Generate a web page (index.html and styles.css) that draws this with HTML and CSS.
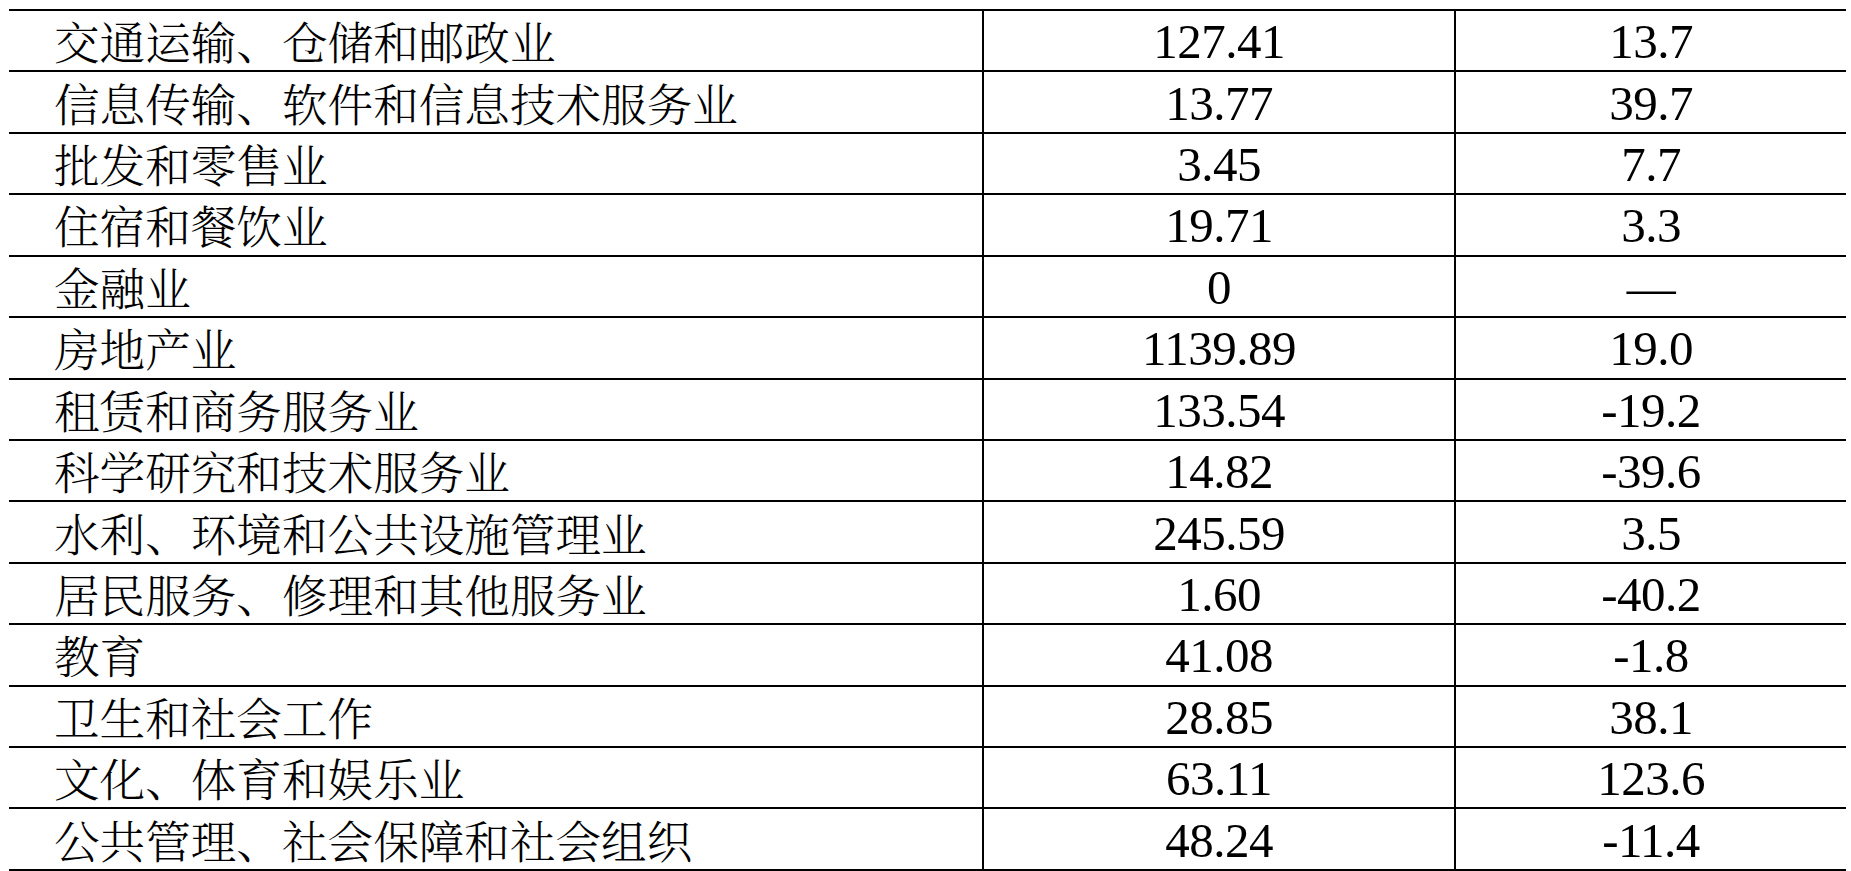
FILE: index.html
```html
<!DOCTYPE html>
<html lang="zh-CN">
<head>
<meta charset="utf-8">
<title>行业数据</title>
<link rel="stylesheet" href="styles.css">
</head>
<body>
<div class="sheet">
  <div class="cell name">交通运输、仓储和邮政业</div><div class="cell num">127.41</div><div class="cell num">13.7</div>
  <div class="cell name">信息传输、软件和信息技术服务业</div><div class="cell num">13.77</div><div class="cell num">39.7</div>
  <div class="cell name">批发和零售业</div><div class="cell num">3.45</div><div class="cell num">7.7</div>
  <div class="cell name">住宿和餐饮业</div><div class="cell num">19.71</div><div class="cell num">3.3</div>
  <div class="cell name">金融业</div><div class="cell num">0</div><div class="cell num">—</div>
  <div class="cell name">房地产业</div><div class="cell num">1139.89</div><div class="cell num">19.0</div>
  <div class="cell name">租赁和商务服务业</div><div class="cell num">133.54</div><div class="cell num">-19.2</div>
  <div class="cell name">科学研究和技术服务业</div><div class="cell num">14.82</div><div class="cell num">-39.6</div>
  <div class="cell name">水利、环境和公共设施管理业</div><div class="cell num">245.59</div><div class="cell num">3.5</div>
  <div class="cell name">居民服务、修理和其他服务业</div><div class="cell num">1.60</div><div class="cell num">-40.2</div>
  <div class="cell name">教育</div><div class="cell num">41.08</div><div class="cell num">-1.8</div>
  <div class="cell name">卫生和社会工作</div><div class="cell num">28.85</div><div class="cell num">38.1</div>
  <div class="cell name">文化、体育和娱乐业</div><div class="cell num">63.11</div><div class="cell num">123.6</div>
  <div class="cell name">公共管理、社会保障和社会组织</div><div class="cell num">48.24</div><div class="cell num">-11.4</div>
</div>
</body>
</html>
```
FILE: styles.css
```css
html, body {
  margin: 0;
  padding: 0;
  background: #ffffff;
}
body {
  padding: 9px 0 0 9px;
  overflow: hidden;
}
.sheet {
  display: grid;
  grid-template-columns: 973px 472px 392px;
  grid-auto-rows: 61.43px;
  border-top: 2px solid #000;
  width: 1837px;
  color: #000;
}
.cell {
  box-sizing: border-box;
  border-bottom: 2px solid #000;
  display: flex;
  align-items: center;
}
.name {
  padding-left: 45px;
  font-family: "Noto Serif CJK SC", "Noto Sans CJK SC", sans-serif;
  font-size: 45.6px;
  font-weight: 300;
  white-space: nowrap;
}
.num {
  justify-content: center;
  border-left: 2px solid #000;
  font-family: "Liberation Serif", "Noto Sans CJK SC", serif;
  font-size: 49px;
  letter-spacing: -0.5px;
  padding-top: 2px;
}
```
